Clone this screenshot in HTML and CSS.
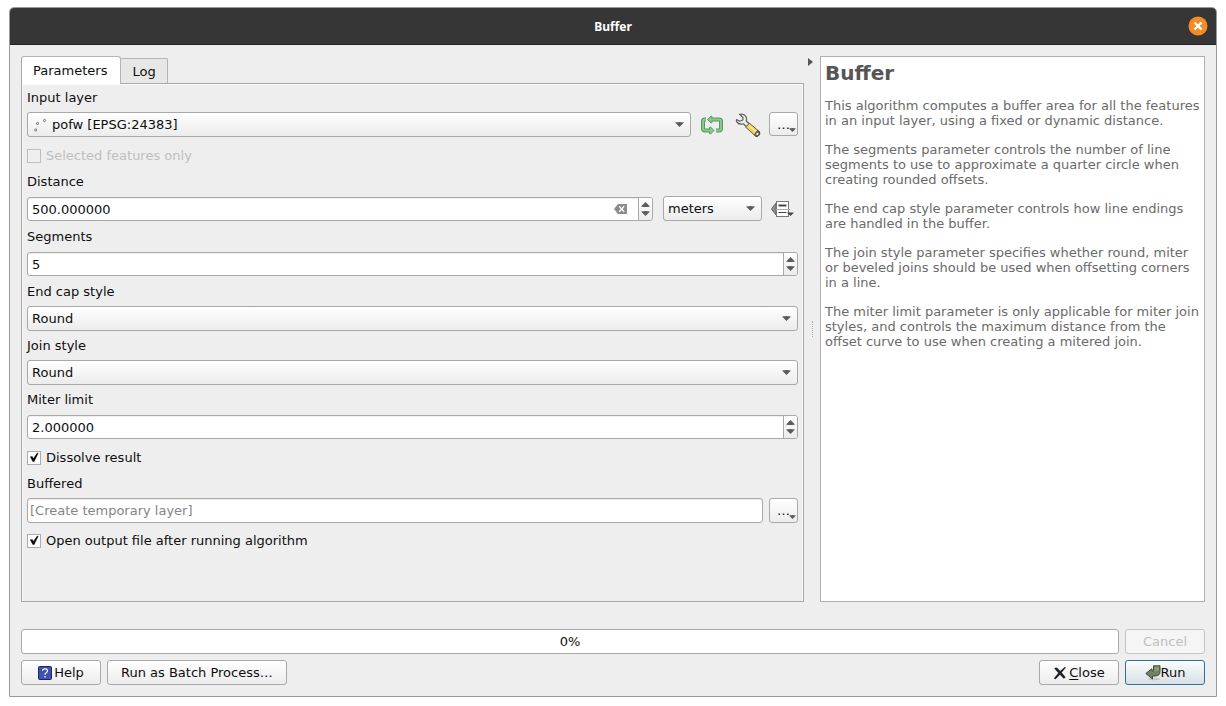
FILE: index.html
```html
<!DOCTYPE html>
<html lang="en">
<head>
<meta charset="utf-8">
<title>Buffer</title>
<link rel="stylesheet" href="styles.css">
</head>
<body>
<svg class="defs" aria-hidden="true">
  <symbol id="down" viewBox="0 0 9 5"><path d="M0 0.500Q4.500 -0.500 9 0.500L4.500 5Z" fill="#5c5c5c"/></symbol>
  <symbol id="up" viewBox="0 0 9 5"><path d="M0 4.500Q4.500 5.500 9 4.500L4.500 0Z" fill="#5c5c5c"/></symbol>
  <symbol id="tick" viewBox="0 0 14 14"><path d="M3.300 5.800L5.300 5.600L6.300 7.800L10 2.300L11.200 2.100L7.200 10.500H5.800Z" fill="#000" stroke="#000" stroke-width=".4"/></symbol>
</svg>
<div class="window">
  <header class="titlebar">
    <h1 class="title">Buffer</h1>
    <button class="win-close" type="button" aria-label="Close window">
      <svg width="20" height="20" viewBox="0 0 20 20"><circle cx="10" cy="10" r="9.500" fill="#f48a28"/><path d="M6.500 6.500L13.500 13.500M13.500 6.500L6.500 13.500" stroke="#fff" stroke-width="2.400"/></svg>
    </button>
  </header>
  <main class="content">
    <div class="split">
      <section class="left">
        <div class="tabs" role="tablist">
          <button class="tab active" type="button" role="tab" aria-selected="true">Parameters</button>
          <button class="tab" type="button" role="tab" aria-selected="false">Log</button>
        </div>
        <form class="pane">
          <label class="label" for="layer">Input layer</label>
          <div class="row">
            <div class="combo grow">
              <select id="layer" class="select with-icon"><option>pofw [EPSG:24383]</option></select>
              <svg class="points" width="14" height="14" viewBox="0 0 14 14" fill="#eee" stroke="#777"><circle cx="3.500" cy="5.500" r="1.100"/><circle cx="10.500" cy="2.500" r="1.100"/><circle cx="1.700" cy="12" r="1.100"/></svg>
              <svg class="arrow" width="9" height="5"><use href="#down"/></svg>
            </div>
            <button class="tool" type="button" aria-label="Iterate over this layer">
              <svg width="24" height="22" viewBox="0 0 24 22"><g fill="none" stroke="#579b63" stroke-width="4" stroke-linejoin="round"><path d="M6 5.500H5Q3 5.500 3 7V14.500Q3 16.500 5 16.500H9"/><path d="M12 5.500H19Q21 5.500 21 7V14.500Q21 16.500 19 16.500H16"/></g><g fill="#8cc68d" stroke="#579b63" stroke-linejoin="round"><path d="M7.500 5.500L11 2L12 2.500V8.500L11 9Z"/><path d="M14 16.500L10.500 13L9.500 13.500V19.500L10.500 20Z"/></g><g fill="none" stroke="#8cc68d" stroke-width="2"><path d="M6 5.500H5Q3 5.500 3 7V14.500Q3 16.500 5 16.500H10"/><path d="M11 5.500H19Q21 5.500 21 7V14.500Q21 16.500 19 16.500H16"/></g></svg>
            </button>
            <button class="tool" type="button" aria-label="Advanced options">
              <svg width="26" height="24" viewBox="0 0 26 24"><path d="M4.500 1.300Q9 .2 11 3.500Q12 6 11.300 8L14.500 11L11.500 14L8.500 10.800Q4.500 12 2.300 9.500Q1 8 1.600 6.500L4.600 8.300L7.800 7L8 4.500Z" fill="#e9ebe8" stroke="#5d615b" stroke-width="1.200" stroke-linejoin="round"/><path d="M10.500 14L14.500 10.300L24.500 18.800Q25.500 23 21 23.500Z" fill="#ecd06c" stroke="#6b6132" stroke-width="1"/><path d="M14 12.500L22 19.500" stroke="#fbe99b" stroke-width="1.500"/><path d="M24.500 18.800Q25.500 23 21 23.500L19.500 21.700L22.500 17.500Z" fill="#77745f" stroke="#44443c"/><circle cx="22.300" cy="21" r="1" fill="#fff"/></svg>
            </button>
            <button class="more" type="button" aria-label="Browse input">…<svg class="corner" width="7" height="4"><use href="#down"/></svg></button>
          </div>
          <label class="check disabled"><span class="box"><input type="checkbox" disabled><svg width="14" height="14"><use href="#tick"/></svg></span>Selected features only</label>

          <label class="label" for="distance">Distance</label>
          <div class="row">
            <div class="spin grow">
              <input id="distance" type="number" step="any" value="500.000000">
              <button class="clear" type="button" aria-label="Clear value"><svg width="13" height="10" viewBox="0 0 13 10"><path d="M4 0H13V10H4L0 5Z" fill="#8b8b8b"/><path d="M5.200 2.300L10.200 7.700M10.200 2.300L5.200 7.700" stroke="#fff" stroke-width="1.300"/></svg></button>
              <span class="steps"><button type="button" aria-label="Increase"><svg width="9" height="5"><use href="#up"/></svg></button><button type="button" aria-label="Decrease"><svg width="9" height="5"><use href="#down"/></svg></button></span>
            </div>
            <div class="combo units">
              <select class="select" aria-label="Distance units"><option>meters</option></select>
              <svg class="arrow" width="9" height="5"><use href="#down"/></svg>
            </div>
            <button class="tool" type="button" aria-label="Data defined override">
              <svg width="24" height="18" viewBox="0 0 24 18"><path d="M5 3V15L.8 9.500V8.500Z" fill="#8d9196" stroke="#62666b"/><rect x="5.500" y="1.500" width="12" height="15" fill="#fff" stroke="#777"/><path d="M7.500 5.500H15.500" stroke="#444" stroke-width="2"/><path d="M5 9.500H19" stroke="#aaa"/><path d="M7.500 12.500H15.500" stroke="#444"/><path d="M16 12.500H23L19.500 16Z" fill="#444"/></svg>
            </button>
          </div>

          <label class="label" for="segments">Segments</label>
          <div class="row">
            <div class="spin grow">
              <input id="segments" type="number" value="5">
              <span class="steps"><button type="button" aria-label="Increase"><svg width="9" height="5"><use href="#up"/></svg></button><button type="button" aria-label="Decrease"><svg width="9" height="5"><use href="#down"/></svg></button></span>
            </div>
          </div>

          <label class="label" for="cap">End cap style</label>
          <div class="combo">
            <select id="cap" class="select"><option>Round</option><option>Flat</option><option>Square</option></select>
            <svg class="arrow" width="9" height="5"><use href="#down"/></svg>
          </div>

          <label class="label" for="join">Join style</label>
          <div class="combo">
            <select id="join" class="select"><option>Round</option><option>Miter</option><option>Bevel</option></select>
            <svg class="arrow" width="9" height="5"><use href="#down"/></svg>
          </div>

          <label class="label" for="miter">Miter limit</label>
          <div class="row">
            <div class="spin grow">
              <input id="miter" type="number" step="any" value="2.000000">
              <span class="steps"><button type="button" aria-label="Increase"><svg width="9" height="5"><use href="#up"/></svg></button><button type="button" aria-label="Decrease"><svg width="9" height="5"><use href="#down"/></svg></button></span>
            </div>
          </div>
          <label class="check"><span class="box"><input type="checkbox" checked><svg width="14" height="14"><use href="#tick"/></svg></span>Dissolve result</label>

          <label class="label" for="output">Buffered</label>
          <div class="row output-row">
            <input id="output" class="text grow" type="text" placeholder="[Create temporary layer]">
            <button class="more" type="button" aria-label="Browse output">…<svg class="corner" width="7" height="4"><use href="#down"/></svg></button>
          </div>
          <label class="check"><span class="box"><input type="checkbox" checked><svg width="14" height="14"><use href="#tick"/></svg></span>Open output file after running algorithm</label>
        </form>
      </section>
      <div class="splitter">
        <button class="collapse" type="button" aria-label="Collapse help"><svg width="5" height="8" viewBox="0 0 5 8"><path d="M0 0L5 4L0 8Z" fill="#555"/></svg></button>
        <span class="grip"></span>
      </div>
      <article class="help">
        <h2>Buffer</h2>
        <p>This algorithm computes a buffer area for all the features in an input layer, using a fixed or dynamic distance.</p>
        <p>The segments parameter controls the number of line segments to use to approximate a quarter circle when creating rounded offsets.</p>
        <p>The end cap style parameter controls how line endings are handled in the buffer.</p>
        <p>The join style parameter specifies whether round, miter or beveled joins should be used when offsetting corners in a line.</p>
        <p>The miter limit parameter is only applicable for miter join styles, and controls the maximum distance from the offset curve to use when creating a mitered join.</p>
      </article>
    </div>
    <footer class="footer">
      <div class="row-foot">
        <div class="progress grow" role="progressbar" aria-valuenow="0" aria-valuemin="0" aria-valuemax="100">0%</div>
        <button class="btn" type="button" disabled>Cancel</button>
      </div>
      <div class="row-foot">
        <button class="btn" type="button"><svg width="14" height="14" viewBox="0 0 14 14"><rect x=".5" y=".5" width="13" height="13" rx="1" fill="#3f51b5" stroke="#1b2560"/><path d="M4.500 4.800Q4.600 2.800 7 2.800Q9.500 2.800 9.500 4.800Q9.500 6 8.200 6.800Q7 7.500 7 8.700M7 10V11.500" fill="none" stroke="#fff" stroke-width="1.200"/></svg>Help</button>
        <button class="btn" type="button">Run as Batch Process…</button>
        <span class="grow"></span>
        <button class="btn" type="button"><svg width="14" height="14" viewBox="0 0 14 14"><path d="M1.300 2.500Q3 .8 4.600 2.300L7.200 5L11.800 1L13 1.500L8.700 6.500L12.600 11.200L10.800 12.800L7 8.800L2.500 13.300L.8 12.500L5.300 7Z" fill="#222"/></svg><span><u>C</u>lose</span></button>
        <button class="btn primary" type="button"><svg width="16" height="16" viewBox="0 0 16 16"><ellipse cx="9" cy="14" rx="6" ry="1.500" fill="#c5c9c8"/><path d="M8.500 .8H15V6.500Q15 11 10 11H7.500V14L.8 8.500L6.800 3.800L7.500 6.500Q8.500 6.500 8.500 5Z" fill="#718260" stroke="#414d37" stroke-linejoin="round"/><path d="M9.500 1.800H14V5Q12 6.500 9.500 6.500Z" fill="#8a9a79"/></svg>Run</button>
      </div>
    </footer>
  </main>
</div>
</body>
</html>
```
FILE: styles.css
```css
*, *::before, *::after { box-sizing: border-box; }

body {
  margin: 0;
  min-height: 100vh;
  padding: 7px 9px 9px;
  display: flex;
  background: #fff;
  color: #0e0e0e;
  font: 13px/17px "DejaVu Sans", sans-serif;
}

button, input, select { font: inherit; color: inherit; margin: 0; }
button { padding: 0; border: 0; background: none; }
svg { display: block; flex: none; }
.defs { position: absolute; width: 0; height: 0; }
.grow { flex: 1; min-width: 0; }

.window {
  flex: 1;
  min-width: 0;
  display: flex;
  flex-direction: column;
  border: 1px solid #999;
  border-radius: 5px 5px 0 0;
  background: #eee;
}

.titlebar {
  display: grid;
  grid-template-columns: 1fr auto 1fr;
  align-items: center;
  height: 37px;
  padding: 0 8px;
  border-bottom: 1px solid #222;
  border-radius: 4px 4px 0 0;
  background: #363636;
}
.title { grid-column: 2; margin: 0; color: #fff; font: bold 12px/17px "Noto Sans", sans-serif; }
.win-close { justify-self: end; }

.content { flex: 1; display: flex; flex-direction: column; gap: 27px; padding: 11px; }
.split { flex: 1; display: flex; }
.left { flex: 1; min-width: 0; display: flex; flex-direction: column; }

.tabs { display: flex; align-items: flex-end; height: 27px; }
.tab {
  height: 25px;
  padding: 0 11px;
  border: 1px solid #b4b4b4;
  border-left: 0;
  border-bottom: 0;
  border-radius: 0 2px 0 0;
  background: #e7e7e7;
}
.tab.active {
  z-index: 1;
  height: 28px;
  margin-bottom: -1px;
  padding-right: 13px;
  border-left: 1px solid #a8a8a8;
  border-radius: 3px 3px 0 0;
  background: #fff;
}

.pane {
  flex: 1;
  display: flex;
  flex-direction: column;
  gap: 6px;
  padding: 5px;
  border: 1px solid #a8a8a8;
  box-shadow: inset 1px 1px #fafafa, inset -1px 0 #fafafa;
}
.label { align-self: flex-start; }
.row { display: flex; gap: 6px; height: 26px; }
.output-row { height: 25px; }

.combo { display: grid; height: 25px; }
.combo > * { grid-area: 1 / 1; }
.select {
  appearance: none;
  width: 100%;
  padding: 0 20px 0 4px;
  border: 1px solid #a8a8a8;
  border-radius: 3px;
  background: linear-gradient(#fff, #ececec);
  outline: 0;
}
.select.with-icon { padding-left: 24px; }
.arrow { place-self: center end; margin-right: 7px; pointer-events: none; }
.points { place-self: center start; margin-left: 7px; pointer-events: none; }
.units { width: 99px; margin-left: 4px; }

.spin {
  display: flex;
  height: 24px;
  margin-top: 1px;
  border: 1px solid #a8a8a8;
  border-radius: 3px;
  background: #fff;
  box-shadow: inset 0 1px #efefef;
}
.spin input {
  appearance: textfield;
  flex: 1;
  min-width: 0;
  padding: 0 4px;
  border: 0;
  background: none;
  outline: 0;
}
.spin input::-webkit-inner-spin-button { appearance: none; margin: 0; }
.clear { width: 36px; display: grid; place-items: center; }
.steps {
  display: flex;
  flex-direction: column;
  justify-content: center;
  gap: 4px;
  width: 14px;
  border-left: 1px solid #a8a8a8;
  border-radius: 0 2px 2px 0;
  background: linear-gradient(#fff, #ececec);
}
.steps button { display: grid; justify-items: center; }

.tool { width: 30px; height: 25px; display: grid; place-items: center; }
.more {
  position: relative;
  width: 29px;
  height: 24px;
  border: 1px solid #a8a8a8;
  border-radius: 3px;
  background: linear-gradient(#fff, #ececec);
}
.output-row .more { height: 25px; }
.corner { position: absolute; right: 1px; bottom: 3px; }

.text {
  padding: 0 2px;
  border: 1px solid #a8a8a8;
  border-radius: 3px;
  background: #fff;
  box-shadow: inset 0 1px #efefef;
  outline: 0;
}
.text::placeholder { color: #858585; }

.check { display: flex; align-items: center; align-self: flex-start; gap: 5px; height: 23px; }
.box { display: grid; }
.box > * { grid-area: 1 / 1; }
.box input { appearance: none; width: 14px; height: 14px; border: 1px solid #acacac; background: #fff; }
.box svg { visibility: hidden; pointer-events: none; }
.box input:checked + svg { visibility: visible; }
.disabled { color: #bebebe; }
.disabled input { border-color: #bebebe; background: #efefef; }

.splitter { position: relative; width: 16px; display: flex; align-items: center; justify-content: center; }
.collapse { position: absolute; top: 2px; left: 4px; }
.grip { height: 16px; border-left: 1px dotted #aaa; }

.help {
  width: 385px;
  padding: 4px;
  border: 1px solid #b0b0b0;
  background: #fff;
  color: #6a6a6a;
  line-height: 15px;
}
.help h2 { margin: 0 0 12px; color: #555; font-size: 20px; line-height: 25px; }
.help p { margin: 0 0 14px; }

.footer { display: flex; flex-direction: column; gap: 6px; }
.row-foot { display: flex; gap: 6px; }
.progress {
  height: 25px;
  border: 1px solid #a8a8a8;
  border-radius: 3px;
  background: #fff;
  line-height: 23px;
  text-align: center;
}
.btn {
  display: flex;
  align-items: center;
  justify-content: center;
  gap: 2px;
  min-width: 80px;
  height: 25px;
  padding: 0 13px;
  border: 1px solid #a8a8a8;
  border-radius: 3px;
  background: linear-gradient(#fff, #ececec);
}
.btn u { text-underline-offset: 2px; }
.btn:disabled { border-color: #c4c4c4; color: #bebebe; background: #f5f5f5; }
.btn.primary { gap: 0; border-color: #2b729d; background: linear-gradient(#fbfcfd, #d8e0e6); }
```
